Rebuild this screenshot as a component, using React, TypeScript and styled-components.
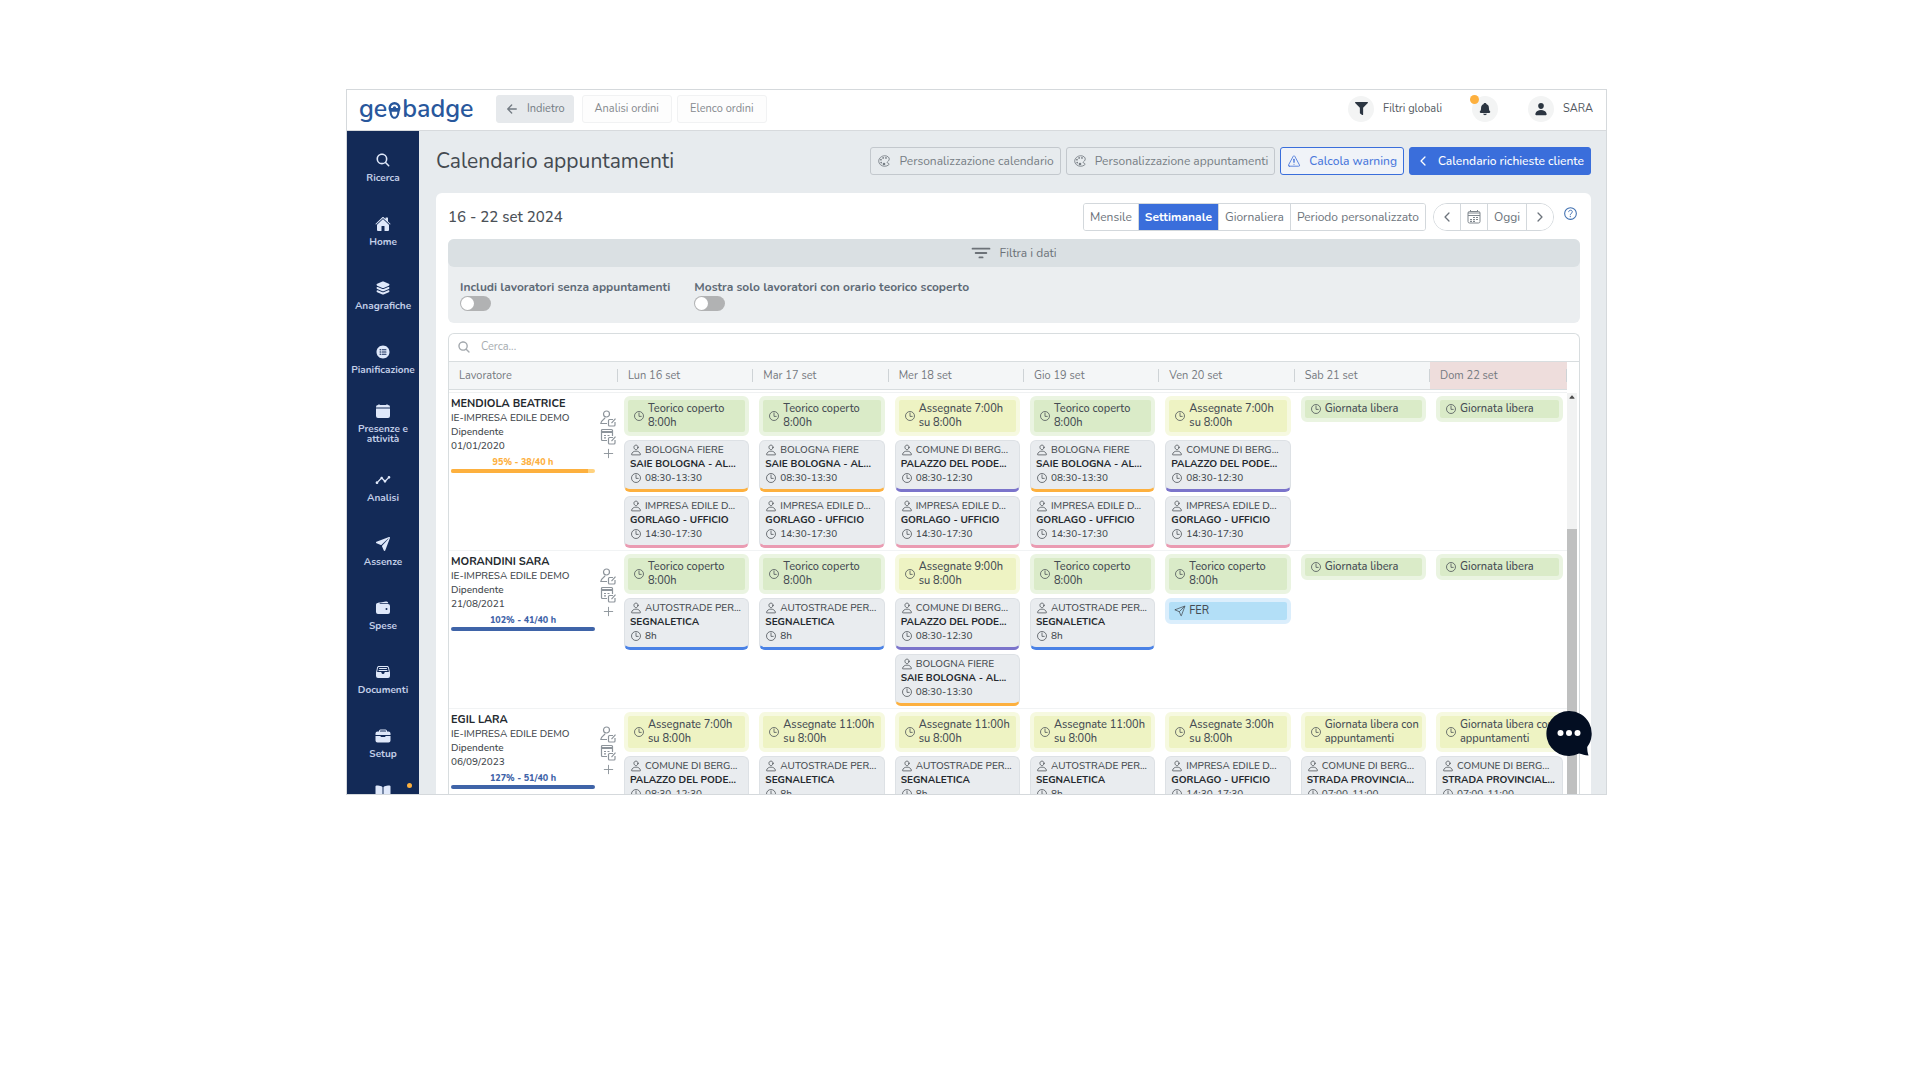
import type { ReactNode } from "react";
import styled, { createGlobalStyle } from "styled-components";
import {
  IoAdd,
  IoArrowBack,
  IoBook,
  IoBriefcase,
  IoCalendarClear,
  IoCaretUp,
  IoChevronBack,
  IoChevronForward,
  IoColorPaletteOutline,
  IoFileTrayFull,
  IoFilter,
  IoHelpCircleOutline,
  IoHome,
  IoLayers,
  IoListCircle,
  IoNotifications,
  IoPaperPlane,
  IoPaperPlaneOutline,
  IoPerson,
  IoPersonOutline,
  IoSearch,
  IoTimeOutline,
  IoWallet,
  IoWarningOutline,
} from "react-icons/io5";
import { FaFilter } from "react-icons/fa";
import { MdTimeline } from "react-icons/md";

type Tone = "green" | "yellow" | "blue";

interface Visit {
  client: string;
  site: string;
  time: string;
  color: string;
}

interface Day {
  tone: Tone;
  lines: string[];
  visits: Visit[];
  leave?: string;
}

interface Worker {
  name: string;
  hired: string;
  progress: string;
  value: number;
  late?: boolean;
  days: Day[];
}

const ORANGE = "#fdb03e";
const PINK = "#ea9bb2";
const PURPLE = "#7b74cb";
const BLUE = "#4a82e6";

const fiere: Visit = { client: "BOLOGNA FIERE", site: "SAIE BOLOGNA - AL...", time: "08:30-13:30", color: ORANGE };
const ufficio: Visit = { client: "IMPRESA EDILE D...", site: "GORLAGO - UFFICIO", time: "14:30-17:30", color: PINK };
const comune: Visit = { client: "COMUNE DI BERG...", site: "PALAZZO DEL PODE...", time: "08:30-12:30", color: PURPLE };
const autostrade: Visit = { client: "AUTOSTRADE PER...", site: "SEGNALETICA", time: "8h", color: BLUE };
const strada: Visit = { client: "COMUNE DI BERG...", site: "STRADA PROVINCIA...", time: "07:00-11:00", color: PURPLE };

const covered = (visits: Visit[], leave?: string): Day => ({
  tone: "green",
  lines: ["Teorico coperto", "8:00h"],
  visits,
  leave,
});
const assigned = (hours: string, visits: Visit[]): Day => ({
  tone: "yellow",
  lines: [`Assegnate ${hours}h`, "su 8:00h"],
  visits,
});
const free: Day = { tone: "green", lines: ["Giornata libera"], visits: [] };
const freeBusy: Day = { tone: "yellow", lines: ["Giornata libera con", "appuntamenti"], visits: [strada] };

const workers: Worker[] = [
  {
    name: "MENDIOLA BEATRICE",
    hired: "01/01/2020",
    progress: "95% - 38/40 h",
    value: 95,
    late: true,
    days: [
      covered([fiere, ufficio]),
      covered([fiere, ufficio]),
      assigned("7:00", [comune, ufficio]),
      covered([fiere, ufficio]),
      assigned("7:00", [comune, ufficio]),
      free,
      free,
    ],
  },
  {
    name: "MORANDINI SARA",
    hired: "21/08/2021",
    progress: "102% - 41/40 h",
    value: 100,
    days: [
      covered([autostrade]),
      covered([autostrade]),
      assigned("9:00", [comune, fiere]),
      covered([autostrade]),
      covered([], "FER"),
      free,
      free,
    ],
  },
  {
    name: "EGIL LARA",
    hired: "06/09/2023",
    progress: "127% - 51/40 h",
    value: 100,
    days: [
      assigned("7:00", [comune]),
      assigned("11:00", [autostrade]),
      assigned("11:00", [autostrade]),
      assigned("11:00", [autostrade]),
      assigned("3:00", [ufficio]),
      freeBusy,
      { ...freeBusy, visits: [{ ...strada, site: "STRADA PROVINCIAL..." }] },
    ],
  },
];

const weekDays = ["Lun 16 set", "Mar 17 set", "Mer 18 set", "Gio 19 set", "Ven 20 set", "Sab 21 set", "Dom 22 set"];

const menu: { label: string; icon: ReactNode }[] = [
  { label: "Ricerca", icon: <IoSearch /> },
  { label: "Home", icon: <IoHome /> },
  { label: "Anagrafiche", icon: <IoLayers /> },
  { label: "Pianificazione", icon: <IoListCircle /> },
  { label: "Presenze e attività", icon: <IoCalendarClear /> },
  { label: "Analisi", icon: <MdTimeline /> },
  { label: "Assenze", icon: <IoPaperPlane /> },
  { label: "Spese", icon: <IoWallet /> },
  { label: "Documenti", icon: <IoFileTrayFull /> },
  { label: "Setup", icon: <IoBriefcase /> },
];

const GlobalStyle = createGlobalStyle`
  *, *::before, *::after { box-sizing: border-box; }
  body {
    margin: 0;
    background: #fff;
    color: #42484f;
    font-family: Nunito, Lato, "Open Sans", sans-serif;
    font-size: 11px;
    line-height: 14px;
  }
  button, input { font: inherit; color: inherit; }
  button { cursor: pointer; }
  svg { display: block; flex: none; }
`;

const Page = styled.div`
  display: flex;
  height: 100vh;
  min-height: 600px;
  padding: 89px 313px 285px 346px;
`;

const AppWindow = styled.div`
  position: relative;
  display: flex;
  flex: 1;
  flex-direction: column;
  min-width: 0;
  overflow: hidden;
  border: 1px solid #d5d9dc;
`;

const Header = styled.header`
  display: flex;
  flex: none;
  align-items: center;
  height: 41px;
  padding: 0 13px 3px 12px;
  border-bottom: 1px solid #d7dadd;
  background: #fff;
`;

const Logo = styled.a`
  display: flex;
  align-items: center;
  width: 137px;
  height: 32px;
  color: #28579c;
  font-size: 25px;
  font-weight: 600;
  line-height: 24px;
  text-decoration: none;
`;

const HeaderButton = styled.button<{ $active?: boolean }>`
  display: flex;
  align-items: center;
  justify-content: center;
  gap: 8px;
  min-width: ${({ $active }) => ($active ? "77px" : "90px")};
  height: 28px;
  margin-right: ${({ $active }) => ($active ? "8px" : "5px")};
  padding: 0 8px;
  border: 1px solid ${({ $active }) => ($active ? "#e6e9ec" : "#f1f2f3")};
  border-radius: 3px;
  background: ${({ $active }) => ($active ? "#e6e9ec" : "#fdfdfd")};
  color: ${({ $active }) => ($active ? "#737b83" : "#85898e")};
`;

const HeaderTools = styled.div`
  display: flex;
  align-items: center;
  margin-left: auto;
`;

const ToolButton = styled.button`
  display: flex;
  align-items: center;
  gap: 9px;
  margin-left: 30px;
  padding: 0;
  border: 0;
  background: none;
  color: #54595f;
`;

const RoundIcon = styled.span`
  position: relative;
  display: grid;
  place-items: center;
  width: 26px;
  height: 26px;
  border-radius: 50%;
  background: #f3f4f4;
  color: #2b3541;
  font-size: 14px;
`;

const Dot = styled.span<{ $size: number }>`
  position: absolute;
  top: -1px;
  left: -2px;
  width: ${({ $size }) => $size}px;
  height: ${({ $size }) => $size}px;
  border-radius: 50%;
  background: ${ORANGE};
`;

const Body = styled.div`
  display: flex;
  flex: 1;
  min-height: 0;
`;

const Sidebar = styled.nav`
  flex: none;
  width: 72px;
  padding-top: 4px;
  overflow: hidden;
  background: #132a57;
`;

const MenuItem = styled.a<{ $bare?: boolean }>`
  position: relative;
  display: flex;
  flex-direction: column;
  align-items: center;
  justify-content: ${({ $bare }) => ($bare ? "flex-start" : "center")};
  gap: 5px;
  height: 64px;
  padding: ${({ $bare }) => ($bare ? "9px" : "0")} 4px 0;
  color: #c3cfe8;
  font-size: 10px;
  font-weight: 700;
  line-height: 10px;
  text-align: center;
  text-decoration: none;

  svg {
    color: #dfe8fa;
    font-size: 16px;
  }
`;

const MenuDot = styled(Dot)`
  top: 8px;
  left: 60px;
`;

const Main = styled.main`
  display: flex;
  flex: 1;
  flex-direction: column;
  min-width: 0;
  padding: 16px 15px 0 17px;
  background: #e7ebee;
`;

const TitleBar = styled.div`
  display: flex;
  flex: none;
  align-items: center;
  gap: 5px;
  height: 28px;
  margin-bottom: 18px;
`;

const Title = styled.h1`
  flex: 1;
  margin: 0;
  color: #444a50;
  font-size: 21px;
  font-weight: 400;
  line-height: 28px;
`;

const ActionButton = styled.button<{ $kind?: "outline" | "primary" }>`
  display: flex;
  align-items: center;
  gap: 8px;
  height: 28px;
  padding: 0 6px;
  border: 1px solid ${({ $kind }) => ($kind ? "#3a6edb" : "#c3c8cd")};
  border-radius: 3px;
  background: ${({ $kind }) => ($kind === "primary" ? "#3a6edb" : $kind === "outline" ? "#f0f3f8" : "transparent")};
  color: ${({ $kind }) => ($kind === "primary" ? "#fff" : $kind === "outline" ? "#4a78dc" : "#767d84")};
  font-size: 12px;
  font-weight: ${({ $kind }) => ($kind ? 500 : 400)};

  svg {
    font-size: 14px;
  }
`;

const Card = styled.section`
  display: flex;
  flex: 1;
  flex-direction: column;
  min-height: 0;
  padding: 10px 11px 0 12px;
  border-radius: 6px 6px 0 0;
  background: #fff;
`;

const Toolbar = styled.div`
  display: flex;
  flex: none;
  align-items: center;
  height: 28px;
  margin-bottom: 8px;
`;

const Range = styled.h2`
  flex: 1;
  margin: 0;
  color: #4b5157;
  font-size: 15px;
  font-weight: 500;
`;

const Segments = styled.div<{ $round?: boolean }>`
  display: flex;
  height: 28px;
  margin-left: 7px;
  overflow: hidden;
  border: 1px solid #d3d8dc;
  border-radius: ${({ $round }) => ($round ? "14px" : "3px")};
`;

const Segment = styled.button<{ $active?: boolean }>`
  display: flex;
  align-items: center;
  justify-content: center;
  min-width: 26px;
  padding: 0 6px;
  border: 0;
  background: ${({ $active }) => ($active ? "#3a6edb" : "#fff")};
  color: ${({ $active }) => ($active ? "#fff" : "#6c737b")};
  font-size: 12px;
  font-weight: ${({ $active }) => ($active ? 700 : 400)};

  & + & {
    border-left: 1px solid #d3d8dc;
  }
`;

const HelpButton = styled.button`
  align-self: flex-start;
  margin: 0 1px 0 8px;
  padding: 2px 0;
  border: 0;
  background: none;
  color: #3f6fb0;
  font-size: 17px;
`;

const Filters = styled.div`
  flex: none;
  margin-bottom: 10px;
  border-radius: 6px;
  background: #ebeef0;
`;

const FilterToggle = styled.button`
  display: flex;
  align-items: center;
  justify-content: center;
  gap: 8px;
  width: 100%;
  height: 28px;
  border: 0;
  border-radius: 6px;
  background: #dae0e3;
  color: #6c7278;
  font-size: 12px;

  svg {
    font-size: 20px;
  }
`;

const FilterFields = styled.div`
  display: flex;
  gap: 24px;
  padding: 13px 12px 12px;
`;

const SwitchField = styled.label`
  display: flex;
  flex-direction: column;
  gap: 2px;
  color: #5e6a76;
  font-size: 12px;
  font-weight: 700;
`;

const Switch = styled.input`
  width: 31px;
  height: 15px;
  margin: 0;
  appearance: none;
  border-radius: 8px;
  background: #b1b2b3;

  &::before {
    content: "";
    display: block;
    width: 13px;
    height: 13px;
    margin: 1px;
    border-radius: 50%;
    background: #fff;
  }

  &:checked {
    background: #3a6edb;
  }

  &:checked::before {
    margin-left: 17px;
  }
`;

const Board = styled.div`
  display: flex;
  flex: 1;
  flex-direction: column;
  min-height: 0;
  border: 1px solid #d8dddf;
  border-bottom: 0;
  border-radius: 6px 6px 0 0;
`;

const SearchBox = styled.label`
  display: flex;
  flex: none;
  align-items: center;
  gap: 10px;
  height: 28px;
  padding: 0 8px 1px;
  border-bottom: 1px solid #d8dddf;
  color: #a5aaaf;
  font-size: 14px;
`;

const SearchInput = styled.input`
  flex: 1;
  padding: 0;
  border: 0;
  outline: 0;
  background: none;
  font-size: 11px;

  &::placeholder {
    color: #a6abaf;
    opacity: 1;
  }
`;

const Scroller = styled.div`
  display: flex;
  flex: 1;
  min-height: 0;
  overflow: hidden;
`;

const TableArea = styled.div`
  flex: 1;
  min-width: 0;
`;

const Table = styled.table`
  width: 100%;
  border-spacing: 0;
  table-layout: fixed;
`;

const Col = styled.col<{ $width?: number }>`
  width: ${({ $width }) => ($width ? `${$width}px` : "auto")};
`;

const HeadCell = styled.th<{ $holiday?: boolean }>`
  height: 31px;
  padding: 0 0 3px;
  background: linear-gradient(${({ $holiday }) => ($holiday ? "#eedddc, #eedddc" : "#f4f6f7, #f4f6f7")}) 0 0 / 100% 27px no-repeat;
  box-shadow: inset 0 -1px #eff1f2;
  color: #74797f;
  font-weight: 400;
  text-align: left;
`;

const HeadLabel = styled.span`
  display: block;
  height: 28px;
  padding-left: 10px;
  border-bottom: 1px solid #d8dddf;
  line-height: 27px;
`;

const HeadSeparator = styled.span`
  float: right;
  width: 1px;
  height: 13px;
  margin-top: 7px;
  background: #ced3d6;
`;

const Cell = styled.td`
  height: 158px;
  padding: 3px 4px 2px 6px;
  border-bottom: 1px solid #f1f3f4;
  vertical-align: top;
`;

const WorkerCell = styled(Cell)`
  padding: 4px 0 2px 2px;
`;

const WorkerBox = styled.div`
  display: flex;
  gap: 5px;
`;

const WorkerInfo = styled.div`
  width: 144px;
  color: #43484d;
`;

const Line = styled.div<{ $bold?: boolean }>`
  color: ${({ $bold }) => ($bold ? "#23282d" : "inherit")};
  font-size: 10px;
  font-weight: ${({ $bold }) => ($bold ? 700 : 500)};
  white-space: nowrap;
`;

const WorkerName = styled(Line)`
  font-size: 11px;
`;

const Progress = styled.div<{ $late?: boolean }>`
  margin-top: 2px;
  color: ${({ $late }) => ($late ? ORANGE : "#3f64a8")};
  font-size: 9px;
  font-weight: 800;
  text-align: center;
`;

const Track = styled.div<{ $late?: boolean }>`
  height: 4px;
  overflow: hidden;
  border-radius: 2px;
  background: ${({ $late }) => ($late ? "#ffd27f" : "#3f64a8")};
`;

const Fill = styled.div<{ $late?: boolean }>`
  height: 100%;
  background: ${({ $late }) => ($late ? ORANGE : "#3f64a8")};
`;

const WorkerActions = styled.div`
  display: flex;
  flex-direction: column;
  align-items: center;
  padding-top: 13px;
`;

const IconButton = styled.button`
  padding: 0;
  border: 0;
  background: none;
  color: #8d949b;
  font-size: 15px;
`;

const Stack = styled.div`
  display: flex;
  flex-direction: column;
  gap: 4px;
`;

const chipColors: Record<Tone, [string, string]> = {
  green: ["#daebc8", "#eaf4e1"],
  yellow: ["#eef3c3", "#f6f9e0"],
  blue: ["#b3dff7", "#dbeefc"],
};

const Chip = styled.div<{ $tone: Tone }>`
  display: flex;
  align-items: center;
  gap: 3px;
  padding: 2px 0 2px 5px;
  border: 4px solid ${({ $tone }) => chipColors[$tone][1]};
  border-radius: 6px;
  background: ${({ $tone }) => chipColors[$tone][0]};
  color: #454c53;
  font-weight: 500;
  white-space: nowrap;
`;

const VisitCard = styled.article<{ $color: string }>`
  height: 52px;
  padding: 2px 0 0 5px;
  overflow: hidden;
  border: 1px solid #dde1e5;
  border-bottom: 3px solid ${({ $color }) => $color};
  border-radius: 6px;
  background: #e9ecef;
  color: #474c51;
`;

const IconLine = styled(Line)`
  display: flex;
  align-items: center;
  gap: 3px;
`;

const Scrollbar = styled.div`
  flex: none;
  width: 12px;
  padding: 31px 2px 0 0;
`;

const ScrollTrack = styled.div`
  display: flex;
  flex-direction: column;
  align-items: center;
  justify-content: space-between;
  height: 100%;
  background: #f1f2f2;
  color: #4d4d4d;
  font-size: 8px;
`;

const Thumb = styled.div`
  width: 100%;
  height: 66%;
  background: #bfc0c0;
`;

const ChatButton = styled.button`
  position: absolute;
  right: 14px;
  bottom: 37px;
  padding: 0;
  border: 0;
  background: none;
`;

const PinMark = () => (
  <svg width="15" height="22" viewBox="0 0 15 22">
    <path
      d="M7.500 4A6 6 0 0 0 1.500 10c0 1.800.9 2.900 1.100 4.500.4 3.400 2.200 6.300 4.900 6.300s4.500-2.900 4.900-6.300c.2-1.600 1.100-2.700 1.100-4.500a6 6 0 0 0-6-6z"
      fill="#28579c"
    />
    <path d="M7.500 6.400A3.700 3.700 0 0 0 3.900 10h1.900a1.700 1.700 0 1 1 3.400 0h1.900a3.700 3.700 0 0 0-3.600-3.600z" fill="#fff" />
    <path d="M4.700 13.700h5.600c0 2.700-1.100 5.100-2.800 5.100s-2.800-2.400-2.800-5.100z" fill="#fff" />
  </svg>
);

const WeekIcon = () => (
  <svg width="14" height="14" viewBox="0 0 14 14" fill="none" stroke="#7f868d" strokeWidth="1">
    <rect x="1" y="1.500" width="12" height="11.500" rx="1.500" />
    <path d="M1 3h12M1 5.500h12M3.500 0v2M10.500 0v2" />
    <path d="M9 7.500h2M6 7.500h2M9 9.500h2M6 9.500h2M3 9.500h2M3 11.300h2M6 11.300h2" strokeWidth="1.200" />
  </svg>
);

const EditMark = () => (
  <g>
    <path d="M13 9.500H9.500a1 1 0 0 0-1 1V15a1 1 0 0 0 1 1H14a1 1 0 0 0 1-1v-3" fill="#fff" />
    <path d="M11.500 13.200l4-4.500" />
  </g>
);

const EditPersonIcon = () => (
  <svg width="17" height="18" viewBox="0 0 17 18" fill="none" stroke="#8d949b" strokeWidth="1.200">
    <circle cx="6.500" cy="4" r="3" />
    <path d="M5 7.500c0 2-4 2-4.200 6H7" />
    <EditMark />
  </svg>
);

const EditCalendarIcon = () => (
  <svg width="17" height="18" viewBox="0 0 17 18" fill="none" stroke="#8d949b" strokeWidth="1.200">
    <path d="M7 12.500H2.500a1 1 0 0 1-1-1V2.500a1 1 0 0 1 1-1h9a1 1 0 0 1 1 1V8" />
    <path d="M1.500 4h11" strokeWidth="2" />
    <path d="M4 7.500h2M4 9.800h2M7.500 7.500h2" />
    <EditMark />
  </svg>
);

const ChatBubble = () => (
  <svg width="46" height="46" viewBox="0 0 46 46">
    <path d="M23 0a22.500 22.500 0 1 0 10 42.600c3 .8 6 1.600 9.500 2-1-3-1.300-6-1.300-8.600A22.500 22.500 0 0 0 23 0z" fill="#030e22" />
    <circle cx="14.500" cy="22" r="3" fill="#fff" />
    <circle cx="23" cy="22" r="3" fill="#fff" />
    <circle cx="31.500" cy="22" r="3" fill="#fff" />
  </svg>
);

const VisitItem = ({ visit }: { visit: Visit }) => (
  <VisitCard $color={visit.color}>
    <IconLine>
      <IoPersonOutline size={12} />
      {visit.client}
    </IconLine>
    <Line $bold>{visit.site}</Line>
    <IconLine>
      <IoTimeOutline size={12} />
      {visit.time}
    </IconLine>
  </VisitCard>
);

const DayCell = ({ day }: { day: Day }) => (
  <Cell>
    <Stack>
      <Chip $tone={day.tone}>
        <IoTimeOutline size={12} />
        <div>
          {day.lines.map((line) => (
            <div key={line}>{line}</div>
          ))}
        </div>
      </Chip>
      {day.leave && (
        <Chip $tone="blue">
          <IoPaperPlaneOutline size={12} />
          {day.leave}
        </Chip>
      )}
      {day.visits.map((visit) => (
        <VisitItem key={visit.site} visit={visit} />
      ))}
    </Stack>
  </Cell>
);

const WorkerRow = ({ worker }: { worker: Worker }) => (
  <tr>
    <WorkerCell>
      <WorkerBox>
        <WorkerInfo>
          <WorkerName $bold>{worker.name}</WorkerName>
          <Line>IE-IMPRESA EDILE DEMO</Line>
          <Line>Dipendente</Line>
          <Line>{worker.hired}</Line>
          <Progress $late={worker.late}>{worker.progress}</Progress>
          <Track $late={worker.late}>
            <Fill $late={worker.late} style={{ width: `${worker.value}%` }} />
          </Track>
        </WorkerInfo>
        <WorkerActions>
          <IconButton aria-label="Modifica lavoratore">
            <EditPersonIcon />
          </IconButton>
          <IconButton aria-label="Modifica calendario">
            <EditCalendarIcon />
          </IconButton>
          <IconButton aria-label="Aggiungi">
            <IoAdd />
          </IconButton>
        </WorkerActions>
      </WorkerBox>
    </WorkerCell>
    {worker.days.map((day, i) => (
      <DayCell key={weekDays[i]} day={day} />
    ))}
  </tr>
);

const App = () => {
  return (
    <Page>
      <GlobalStyle />
      <AppWindow>
        <Header>
          <Logo href="#">
            ge
            <PinMark />
            badge
          </Logo>
          <HeaderButton $active>
            <IoArrowBack size={14} />
            Indietro
          </HeaderButton>
          <HeaderButton>Analisi ordini</HeaderButton>
          <HeaderButton>Elenco ordini</HeaderButton>
          <HeaderTools>
            <ToolButton>
              <RoundIcon>
                <FaFilter size={13} />
              </RoundIcon>
              Filtri globali
            </ToolButton>
            <ToolButton aria-label="Notifiche">
              <RoundIcon>
                <IoNotifications />
                <Dot $size={9} />
              </RoundIcon>
            </ToolButton>
            <ToolButton>
              <RoundIcon>
                <IoPerson />
              </RoundIcon>
              SARA
            </ToolButton>
          </HeaderTools>
        </Header>
        <Body>
          <Sidebar>
            {menu.map((item) => (
              <MenuItem href="#" key={item.label}>
                {item.icon}
                {item.label}
              </MenuItem>
            ))}
            <MenuItem href="#" aria-label="Guida" $bare>
              <IoBook />
              <MenuDot $size={5} />
            </MenuItem>
          </Sidebar>
          <Main>
            <TitleBar>
              <Title>Calendario appuntamenti</Title>
              <ActionButton>
                <IoColorPaletteOutline />
                Personalizzazione calendario
              </ActionButton>
              <ActionButton>
                <IoColorPaletteOutline />
                Personalizzazione appuntamenti
              </ActionButton>
              <ActionButton $kind="outline">
                <IoWarningOutline />
                Calcola warning
              </ActionButton>
              <ActionButton $kind="primary">
                <IoChevronBack />
                Calendario richieste cliente
              </ActionButton>
            </TitleBar>
            <Card>
              <Toolbar>
                <Range>16 - 22 set 2024</Range>
                <Segments>
                  <Segment>Mensile</Segment>
                  <Segment $active>Settimanale</Segment>
                  <Segment>Giornaliera</Segment>
                  <Segment>Periodo personalizzato</Segment>
                </Segments>
                <Segments $round>
                  <Segment aria-label="Precedente">
                    <IoChevronBack size={14} />
                  </Segment>
                  <Segment aria-label="Scegli data">
                    <WeekIcon />
                  </Segment>
                  <Segment>Oggi</Segment>
                  <Segment aria-label="Successivo">
                    <IoChevronForward size={14} />
                  </Segment>
                </Segments>
                <HelpButton aria-label="Aiuto">
                  <IoHelpCircleOutline />
                </HelpButton>
              </Toolbar>
              <Filters>
                <FilterToggle>
                  <IoFilter />
                  Filtra i dati
                </FilterToggle>
                <FilterFields>
                  <SwitchField>
                    Includi lavoratori senza appuntamenti
                    <Switch type="checkbox" role="switch" />
                  </SwitchField>
                  <SwitchField>
                    Mostra solo lavoratori con orario teorico scoperto
                    <Switch type="checkbox" role="switch" />
                  </SwitchField>
                </FilterFields>
              </Filters>
              <Board>
                <SearchBox>
                  <IoSearch />
                  <SearchInput type="search" placeholder="Cerca..." aria-label="Cerca" />
                </SearchBox>
                <Scroller>
                  <TableArea>
                    <Table>
                      <colgroup>
                        <Col $width={169} />
                        {weekDays.map((day, i) => (
                          <Col key={day} $width={i === 6 ? 137 : undefined} />
                        ))}
                      </colgroup>
                      <thead>
                        <tr>
                          <HeadCell>
                            <HeadSeparator />
                            <HeadLabel>Lavoratore</HeadLabel>
                          </HeadCell>
                          {weekDays.map((day, i) => (
                            <HeadCell key={day} $holiday={i === 6}>
                              <HeadSeparator />
                              <HeadLabel>{day}</HeadLabel>
                            </HeadCell>
                          ))}
                        </tr>
                      </thead>
                      <tbody>
                        {workers.map((worker) => (
                          <WorkerRow key={worker.name} worker={worker} />
                        ))}
                      </tbody>
                    </Table>
                  </TableArea>
                  <Scrollbar>
                    <ScrollTrack>
                      <IoCaretUp />
                      <Thumb />
                    </ScrollTrack>
                  </Scrollbar>
                </Scroller>
              </Board>
            </Card>
          </Main>
        </Body>
        <ChatButton aria-label="Apri chat">
          <ChatBubble />
        </ChatButton>
      </AppWindow>
    </Page>
  );
};

export default App;
